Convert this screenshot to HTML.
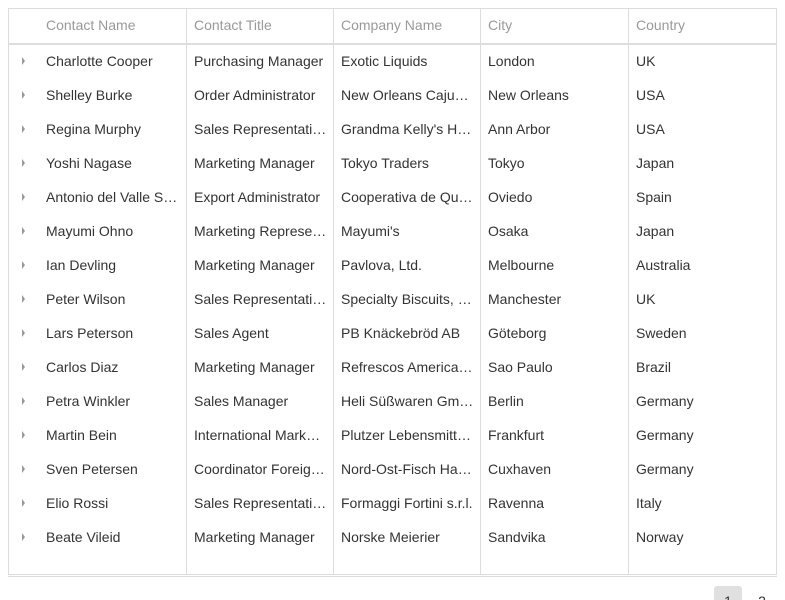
<!DOCTYPE html><html><head><style>
html,body{margin:0;overflow:hidden;height:600px}
body{background:#fff;font-family:"Liberation Sans",sans-serif;font-size:14px;color:#333;width:785px;position:relative}
.g{position:absolute;left:8px;top:8px;width:767px;height:566px;border:1px solid #ddd;border-bottom:none}
.h{position:absolute;left:0;top:0;height:34px;width:100%;border-bottom:2px solid #ddd;color:#999}
.c{position:absolute;top:0;height:100%;box-sizing:border-box;padding-left:7px;white-space:nowrap;overflow:hidden;text-overflow:ellipsis}
.v{position:absolute;top:34px;bottom:0;border-left:1px solid #ddd}
.r{position:absolute;left:0;width:100%;height:34px;line-height:34px}
.h .c{line-height:33px}
.ar{position:absolute;left:13px;top:13px;width:0;height:0;border-left:3px solid #999;border-top:4px solid transparent;border-bottom:4px solid transparent}
.line{position:absolute;left:8px;width:769px;top:574px;border-top:1px solid #ddd}
.line2{position:absolute;left:8px;width:769px;top:576px;border-top:1px solid #ddd}
.pb{position:absolute;top:586px;width:28px;height:28px;line-height:30px;text-align:center;border-radius:3px}
</style></head><body>
<div class="g">
<div class="h">
<div class="c" style="left:27px;width:150px;padding-left:10px">Contact Name</div>
<div class="c" style="left:177px;width:147px;border-left:1px solid #ddd">Contact Title</div>
<div class="c" style="left:324px;width:147px;border-left:1px solid #ddd">Company Name</div>
<div class="c" style="left:471px;width:148px;border-left:1px solid #ddd">City</div>
<div class="c" style="left:619px;width:148px;border-left:1px solid #ddd">Country</div>
</div>
<div class="v" style="left:177px"></div><div class="v" style="left:324px"></div><div class="v" style="left:471px"></div><div class="v" style="left:619px"></div>
<div id="rows"></div>
</div>
<div class="line"></div><div class="line2"></div>
<div class="pb" style="left:714px;background:#e0e0e0">1</div>
<div class="pb" style="left:748px">2</div>
<script>
var d=[["Charlotte Cooper","Purchasing Manager","Exotic Liquids","London","UK"],["Shelley Burke","Order Administrator","New Orleans Cajun Delights","New Orleans","USA"],["Regina Murphy","Sales Representative","Grandma Kelly's Homestead","Ann Arbor","USA"],["Yoshi Nagase","Marketing Manager","Tokyo Traders","Tokyo","Japan"],["Antonio del Valle Saavedra","Export Administrator","Cooperativa de Quesos","Oviedo","Spain"],["Mayumi Ohno","Marketing Representative","Mayumi's","Osaka","Japan"],["Ian Devling","Marketing Manager","Pavlova, Ltd.","Melbourne","Australia"],["Peter Wilson","Sales Representative","Specialty Biscuits, Ltd.","Manchester","UK"],["Lars Peterson","Sales Agent","PB Knäckebröd AB","Göteborg","Sweden"],["Carlos Diaz","Marketing Manager","Refrescos Americanas LTDA","Sao Paulo","Brazil"],["Petra Winkler","Sales Manager","Heli Süßwaren GmbH","Berlin","Germany"],["Martin Bein","International Marketing Mgr.","Plutzer Lebensmittelgroßmärkte","Frankfurt","Germany"],["Sven Petersen","Coordinator Foreign Markets","Nord-Ost-Fisch Handelsgesellschaft","Cuxhaven","Germany"],["Elio Rossi","Sales Representative","Formaggi Fortini s.r.l.","Ravenna","Italy"],["Beate Vileid","Marketing Manager","Norske Meierier","Sandvika","Norway"]];
var L=[[27,150],[178,146],[325,146],[472,147],[620,147]],h="";
d.forEach(function(r,i){h+='<div class="r" style="top:'+(35+i*34)+'px"><div class="ar"></div>';r.forEach(function(t,j){h+='<div class="c" style="left:'+L[j][0]+'px;width:'+L[j][1]+'px;padding-right:6px'+(j==0?';padding-left:10px':'')+'">'+t+'</div>'});h+='</div>'});
document.getElementById('rows').innerHTML=h;
</script>
</body></html>
